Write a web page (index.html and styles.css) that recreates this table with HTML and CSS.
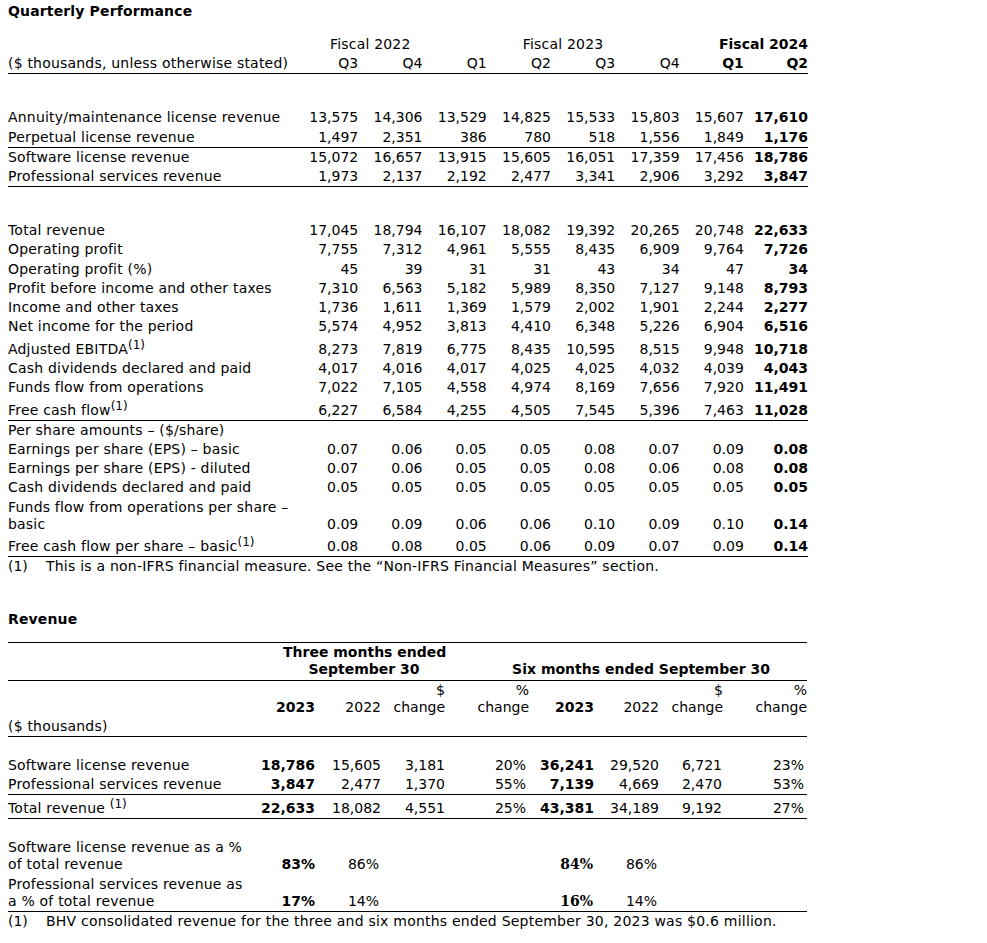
FILE: index.html
```html
<!DOCTYPE html>
<html lang="en">
<head>
<meta charset="utf-8">
<title>Quarterly Performance</title>
<link rel="stylesheet" href="styles.css">
</head>
<body>
<h2 class="section-title title-q">Quarterly Performance</h2>
<table class="qp">
  <colgroup>
    <col class="c-label">
    <col class="c-q"><col class="c-q"><col class="c-q"><col class="c-q">
    <col class="c-q"><col class="c-q"><col class="c-q"><col class="c-q">
  </colgroup>
  <thead>
    <tr>
      <th></th>
      <th colspan="2" class="fy">Fiscal 2022</th>
      <th colspan="4" class="fy">Fiscal 2023</th>
      <th colspan="2" class="b">Fiscal 2024</th>
    </tr>
    <tr class="rule">
      <th class="l">($ thousands, unless otherwise stated)</th>
      <th>Q3</th><th>Q4</th><th>Q1</th><th>Q2</th><th>Q3</th><th>Q4</th><th class="b">Q1</th><th class="b">Q2</th>
    </tr>
  </thead>
  <tbody>
    <tr class="gap"><td colspan="9"></td></tr>
    <tr><td class="l">Annuity/maintenance license revenue</td><td>13,575</td><td>14,306</td><td>13,529</td><td>14,825</td><td>15,533</td><td>15,803</td><td>15,607</td><td class="b">17,610</td></tr>
    <tr class="rule"><td class="l">Perpetual license revenue</td><td>1,497</td><td>2,351</td><td>386</td><td>780</td><td>518</td><td>1,556</td><td>1,849</td><td class="b">1,176</td></tr>
    <tr><td class="l">Software license revenue</td><td>15,072</td><td>16,657</td><td>13,915</td><td>15,605</td><td>16,051</td><td>17,359</td><td>17,456</td><td class="b">18,786</td></tr>
    <tr class="rule"><td class="l">Professional services revenue</td><td>1,973</td><td>2,137</td><td>2,192</td><td>2,477</td><td>3,341</td><td>2,906</td><td>3,292</td><td class="b">3,847</td></tr>
    <tr class="gap"><td colspan="9"></td></tr>
    <tr><td class="l">Total revenue</td><td>17,045</td><td>18,794</td><td>16,107</td><td>18,082</td><td>19,392</td><td>20,265</td><td>20,748</td><td class="b">22,633</td></tr>
    <tr><td class="l">Operating profit</td><td>7,755</td><td>7,312</td><td>4,961</td><td>5,555</td><td>8,435</td><td>6,909</td><td>9,764</td><td class="b">7,726</td></tr>
    <tr><td class="l">Operating profit (%)</td><td>45</td><td>39</td><td>31</td><td>31</td><td>43</td><td>34</td><td>47</td><td class="b">34</td></tr>
    <tr><td class="l">Profit before income and other taxes</td><td>7,310</td><td>6,563</td><td>5,182</td><td>5,989</td><td>8,350</td><td>7,127</td><td>9,148</td><td class="b">8,793</td></tr>
    <tr><td class="l">Income and other taxes</td><td>1,736</td><td>1,611</td><td>1,369</td><td>1,579</td><td>2,002</td><td>1,901</td><td>2,244</td><td class="b">2,277</td></tr>
    <tr><td class="l">Net income for the period</td><td>5,574</td><td>4,952</td><td>3,813</td><td>4,410</td><td>6,348</td><td>5,226</td><td>6,904</td><td class="b">6,516</td></tr>
    <tr class="tall"><td class="l">Adjusted EBITDA<sup>(1)</sup></td><td>8,273</td><td>7,819</td><td>6,775</td><td>8,435</td><td>10,595</td><td>8,515</td><td>9,948</td><td class="b">10,718</td></tr>
    <tr><td class="l">Cash dividends declared and paid</td><td>4,017</td><td>4,016</td><td>4,017</td><td>4,025</td><td>4,025</td><td>4,032</td><td>4,039</td><td class="b">4,043</td></tr>
    <tr><td class="l">Funds flow from operations</td><td>7,022</td><td>7,105</td><td>4,558</td><td>4,974</td><td>8,169</td><td>7,656</td><td>7,920</td><td class="b">11,491</td></tr>
    <tr class="tall rule"><td class="l">Free cash flow<sup>(1)</sup></td><td>6,227</td><td>6,584</td><td>4,255</td><td>4,505</td><td>7,545</td><td>5,396</td><td>7,463</td><td class="b">11,028</td></tr>
    <tr><td class="l" colspan="9">Per share amounts – ($/share)</td></tr>
    <tr><td class="l">Earnings per share (EPS) – basic</td><td>0.07</td><td>0.06</td><td>0.05</td><td>0.05</td><td>0.08</td><td>0.07</td><td>0.09</td><td class="b">0.08</td></tr>
    <tr><td class="l">Earnings per share (EPS) - diluted</td><td>0.07</td><td>0.06</td><td>0.05</td><td>0.05</td><td>0.08</td><td>0.06</td><td>0.08</td><td class="b">0.08</td></tr>
    <tr><td class="l">Cash dividends declared and paid</td><td>0.05</td><td>0.05</td><td>0.05</td><td>0.05</td><td>0.05</td><td>0.05</td><td>0.05</td><td class="b">0.05</td></tr>
    <tr><td class="l">Funds flow from operations per share –<br>basic</td><td>0.09</td><td>0.09</td><td>0.06</td><td>0.06</td><td>0.10</td><td>0.09</td><td>0.10</td><td class="b">0.14</td></tr>
    <tr class="tall rule"><td class="l">Free cash flow per share – basic<sup>(1)</sup></td><td>0.08</td><td>0.08</td><td>0.05</td><td>0.06</td><td>0.09</td><td>0.07</td><td>0.09</td><td class="b">0.14</td></tr>
  </tbody>
</table>
<p class="note"><span class="n">(1)</span>This is a non-IFRS financial measure. See the “Non-IFRS Financial Measures” section.</p>

<h2 class="section-title title-r">Revenue</h2>
<table class="rev">
  <colgroup>
    <col class="r-label">
    <col class="r65"><col class="r66"><col class="r64"><col class="r84">
    <col class="r65"><col class="r65"><col class="r64"><col class="r84">
  </colgroup>
  <thead>
    <tr class="top rule">
      <th></th>
      <th colspan="3" class="three">Three months ended<br>September 30</th>
      <th colspan="5" class="six">Six months ended September 30</th>
    </tr>
    <tr>
      <th></th>
      <th class="b">2023</th><th>2022</th><th>$<br>change</th><th>%<br>change</th>
      <th class="b">2023</th><th>2022</th><th>$<br>change</th><th>%<br>change</th>
    </tr>
    <tr class="rule">
      <th class="l">($ thousands)</th><th colspan="8"></th>
    </tr>
  </thead>
  <tbody>
    <tr class="gap-a"><td colspan="9"></td></tr>
    <tr><td class="l">Software license revenue</td><td class="b">18,786</td><td>15,605</td><td>3,181</td><td class="p">20%</td><td class="b">36,241</td><td>29,520</td><td class="d">6,721</td><td class="p">23%</td></tr>
    <tr class="rule"><td class="l">Professional services revenue</td><td class="b">3,847</td><td>2,477</td><td>1,370</td><td class="p">55%</td><td class="b">7,139</td><td>4,669</td><td class="d">2,470</td><td class="p">53%</td></tr>
    <tr class="tall rule"><td class="l">Total revenue <sup>(1)</sup></td><td class="b">22,633</td><td>18,082</td><td>4,551</td><td class="p">25%</td><td class="b">43,381</td><td>34,189</td><td class="d">9,192</td><td class="p">27%</td></tr>
    <tr class="gap-b"><td colspan="9"></td></tr>
    <tr><td class="l">Software license revenue as a %<br>of total revenue</td><td class="b">83%</td><td class="s">86%</td><td></td><td></td><td class="bs">84%</td><td class="s">86%</td><td></td><td></td></tr>
    <tr class="rule"><td class="l">Professional services revenue as<br>a % of total revenue</td><td class="b">17%</td><td class="s">14%</td><td></td><td></td><td class="bs">16%</td><td class="s">14%</td><td></td><td></td></tr>
  </tbody>
</table>
<p class="note"><span class="n">(1)</span>BHV consolidated revenue for the three and six months ended September 30, 2023 was $0.6 million.</p>
</body>
</html>
```

FILE: styles.css
```css
html, body {
  background: #ffffff;
}

body {
  margin: 0;
  padding: 3px 8px 0;
  font-family: "DejaVu Sans", Verdana, sans-serif;
  font-size: 14px;
  color: #000000;
}

.section-title {
  margin: 0;
  font-size: 14px;
  font-weight: bold;
  line-height: 17px;
  letter-spacing: 0.15px;
}

.title-q {
  margin-bottom: 15px;
}

.title-r {
  margin-top: 36px;
  margin-bottom: 14px;
}

table {
  border-collapse: collapse;
  table-layout: fixed;
}

.qp {
  width: 800px;
}

.c-label {
  width: 286px;
}

.c-q {
  width: 64.25px;
}

.rev {
  width: 799px;
}

.r-label { width: 242px; }
.r64 { width: 64px; }
.r65 { width: 65px; }
.r66 { width: 66px; }
.r84 { width: 84px; }

th, td {
  padding: 1.1px 0;
  line-height: 17px;
  font-weight: normal;
  text-align: right;
  vertical-align: bottom;
  white-space: nowrap;
}

th.l, td.l {
  text-align: left;
  letter-spacing: 0.2px;
}

.b,
th.b,
td.b {
  font-weight: bold;
}

.bs {
  font-family: "DejaVu Serif", serif;
  font-weight: bold;
}

td.s {
  padding-right: 2px;
}

td.bs {
  padding-right: 1px;
}

td.p {
  padding-right: 3px;
}

td.d {
  padding-right: 1px;
}

th.fy {
  text-align: center;
  padding-left: 24px;
  letter-spacing: 0.2px;
}

tr.rule > th,
tr.rule > td {
  border-bottom: 1px solid #000000;
}

tr.top > th,
tr.top > td {
  border-top: 1px solid #000000;
}

tr.tall > th,
tr.tall > td {
  padding-top: 4.5px;
}

tr.gap > td {
  height: 34px;
  padding: 0;
}

tr.gap-a > td {
  height: 19px;
  padding: 0;
}

tr.gap-b > td {
  height: 19.5px;
  padding: 0;
}

sup {
  font-size: 12px;
  line-height: 0;
  vertical-align: 5.5px;
  letter-spacing: 0;
}

th.three {
  text-align: center;
  padding-left: 33px;
  font-weight: bold;
}

th.six {
  text-align: center;
  padding-left: 30px;
  font-weight: bold;
}

.note {
  margin: 0;
  padding-top: 1px;
  line-height: 17px;
  white-space: nowrap;
  letter-spacing: 0.22px;
}

.note .n {
  display: inline-block;
  width: 38px;
  letter-spacing: 0;
}
```
